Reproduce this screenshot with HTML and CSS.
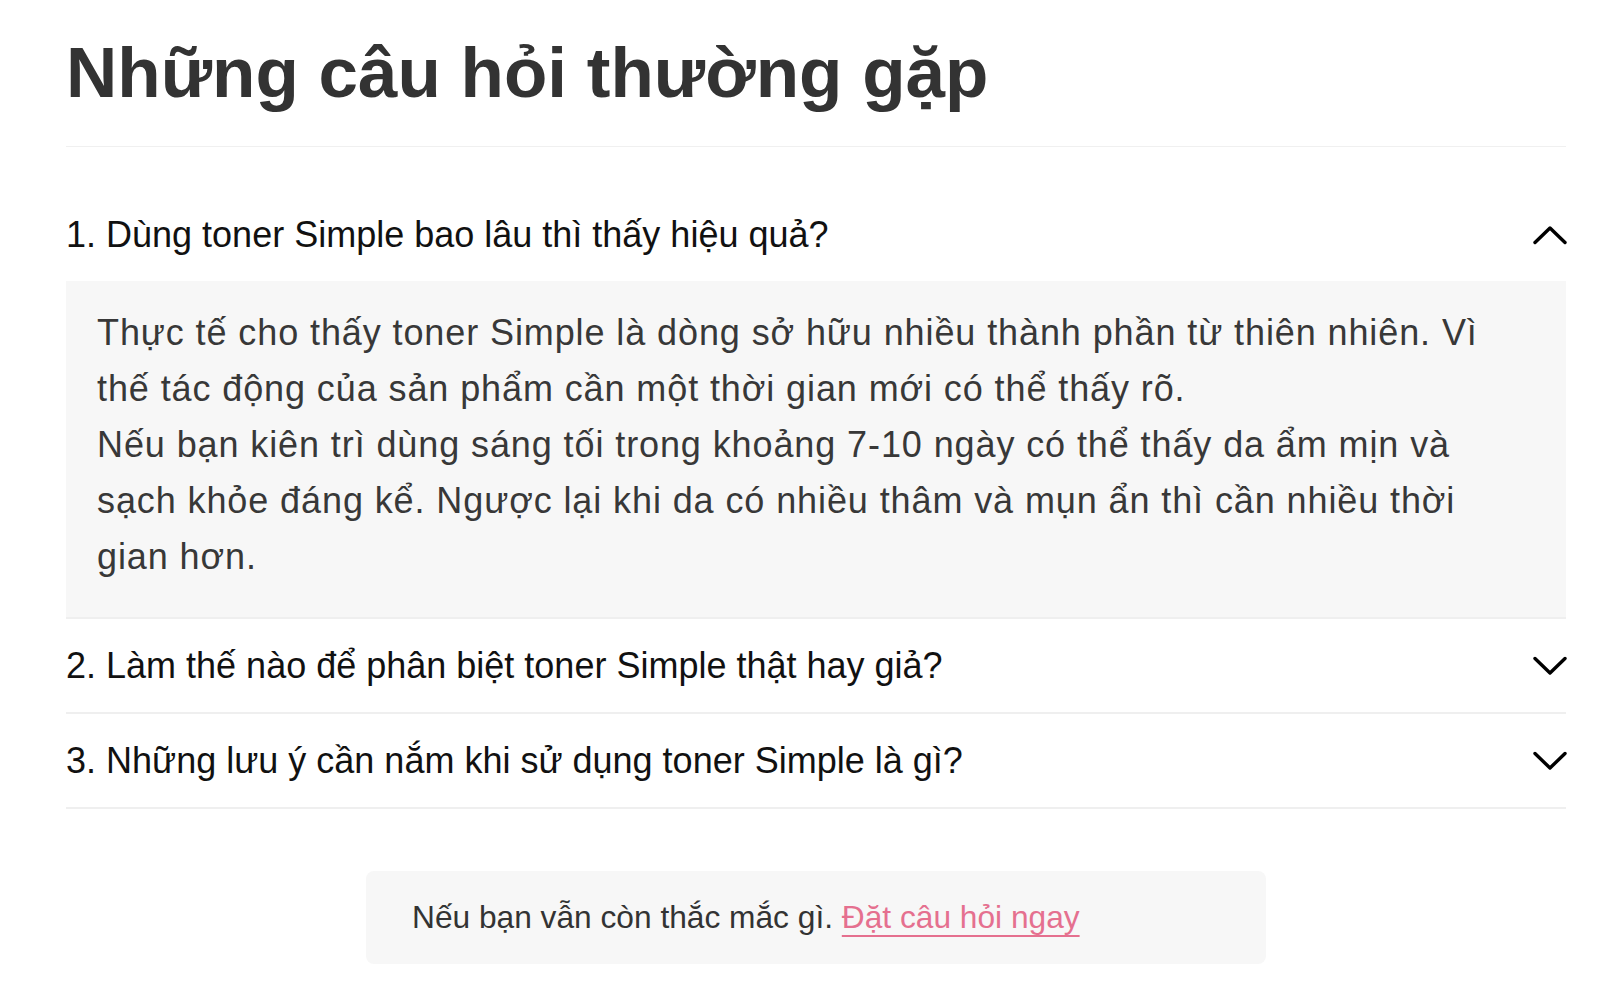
FILE: index.html
```html
<!DOCTYPE html>
<html lang="vi">
<head>
  <meta charset="UTF-8" />
  <title>Những câu hỏi thường gặp</title>
  <link rel="stylesheet" href="styles.css">
</head>
<body>

  <section class="faq">
    <h1 class="faqTitle">Những câu hỏi thường gặp</h1>

    <div class="faqItem open">
      <div class="faqQuestion">
        <span>1. Dùng toner Simple bao lâu thì thấy hiệu quả?</span>
        <svg class="chevron" width="34" height="20" viewBox="0 0 34 20">
          <polyline points="2,17.5 17,3 32,17.5" />
        </svg>
      </div>
      <div class="faqAnswer">
        <p>Thực tế cho thấy toner Simple là dòng sở hữu nhiều thành phần từ thiên nhiên. Vì thế tác động của sản phẩm cần một thời gian mới có thể thấy rõ.</p>
        <p>Nếu bạn kiên trì dùng sáng tối trong khoảng 7-10 ngày có thể thấy da ẩm mịn và sạch khỏe đáng kể. Ngược lại khi da có nhiều thâm và mụn ẩn thì cần nhiều thời gian hơn.</p>
      </div>
    </div>

    <div class="faqItem">
      <div class="faqQuestion">
        <span>2. Làm thế nào để phân biệt toner Simple thật hay giả?</span>
        <svg class="chevron" width="34" height="20" viewBox="0 0 34 20">
          <polyline points="2,2.5 17,17 32,2.5" />
        </svg>
      </div>
    </div>

    <div class="faqItem">
      <div class="faqQuestion">
        <span>3. Những lưu ý cần nắm khi sử dụng toner Simple là gì?</span>
        <svg class="chevron" width="34" height="20" viewBox="0 0 34 20">
          <polyline points="2,2.5 17,17 32,2.5" />
        </svg>
      </div>
    </div>

    <div class="faqMore">
      Nếu bạn vẫn còn thắc mắc gì.&nbsp;<a href="#">Đặt câu hỏi ngay</a>
    </div>
  </section>

</body>
</html>
```

FILE: styles.css
```css
body {
  margin: 0;
  font-family: 'Liberation Sans', Arial, sans-serif;
  background-color: #fff;
  color: #333;
}

.faq {
  width: 1500px;
  margin-left: 66px;
}

.faqTitle {
  margin: 30px 0 0;
  padding-bottom: 31px;
  font-size: 71px;
  line-height: 1.2;
  font-weight: bold;
  color: #333;
  border-bottom: 1px solid #f0f0f0;
}

.faqItem {
  border-bottom: 2px solid #efefef;
}

.faqItem:first-of-type {
  margin-top: 41px;
}

.faqQuestion {
  height: 93px;
  display: flex;
  align-items: center;
  justify-content: space-between;
  font-size: 36px;
  color: #111;
  cursor: pointer;
}

.chevron {
  fill: none;
  stroke: #000;
  stroke-width: 3.4;
  stroke-linecap: round;
  stroke-linejoin: round;
  margin-right: -1px;
}

.faqAnswer {
  background-color: #f7f7f7;
  padding: 24px 31px 32px;
  font-size: 36px;
  line-height: 56px;
  letter-spacing: 0.9px;
  color: #383838;
}

.faqAnswer p {
  margin: 0;
}

.faqMore {
  width: 900px;
  box-sizing: border-box;
  margin: 62px auto 0;
  padding: 0 46px;
  height: 93px;
  display: flex;
  align-items: center;
  background-color: #f7f7f7;
  border-radius: 8px;
  font-size: 31.7px;
  color: #333;
}

.faqMore a {
  color: #e5708f;
  text-decoration: underline;
  text-decoration-thickness: 2px;
  text-underline-offset: 7px;
}
```
